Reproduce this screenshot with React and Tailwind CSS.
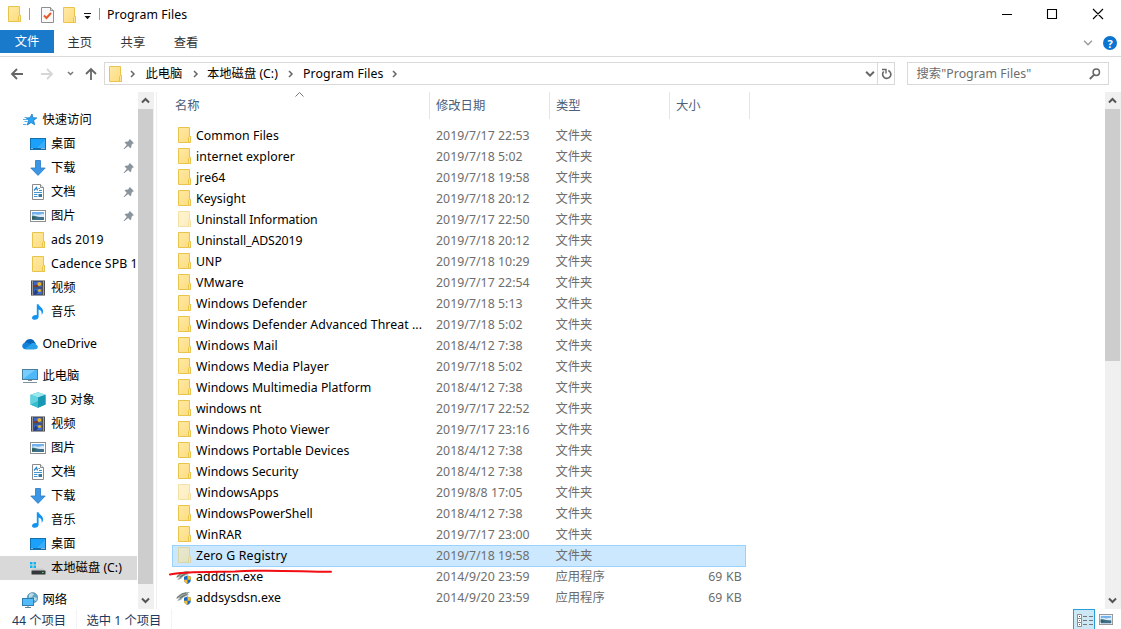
import React from 'react';

const FOLDER = '文件夹';
const APP = '应用程序';
const files = [
  ['Common Files', '2019/7/17 22:53'],
  ['internet explorer', '2019/7/18 5:02'],
  ['jre64', '2019/7/18 19:58'],
  ['Keysight', '2019/7/18 20:12'],
  ['Uninstall Information', '2019/7/17 22:50', 'hidden', 'tracking-[-0.1px]'],
  ['Uninstall_ADS2019', '2019/7/18 20:12', '', 'tracking-[-0.1px]'],
  ['UNP', '2019/7/18 10:29'],
  ['VMware', '2019/7/17 22:54', '', 'tracking-[0.15px]'],
  ['Windows Defender', '2019/7/18 5:13'],
  ['Windows Defender Advanced Threat ...', '2019/7/18 5:02'],
  ['Windows Mail', '2018/4/12 7:38', '', 'tracking-[0.15px]'],
  ['Windows Media Player', '2019/7/18 5:02', '', 'tracking-[0.13px]'],
  ['Windows Multimedia Platform', '2018/4/12 7:38', '', 'tracking-[0.02px]'],
  ['windows nt', '2019/7/17 22:52', '', 'tracking-[-0.07px]'],
  ['Windows Photo Viewer', '2019/7/17 23:16'],
  ['Windows Portable Devices', '2018/4/12 7:38'],
  ['Windows Security', '2018/4/12 7:38', '', 'tracking-[0.02px]'],
  ['WindowsApps', '2019/8/8 17:05', 'hidden', 'tracking-[0.13px]'],
  ['WindowsPowerShell', '2018/4/12 7:38', '', 'tracking-[0.02px]'],
  ['WinRAR', '2019/7/17 23:00'],
  ['Zero G Registry', '2019/7/18 19:58', 'selected', 'tracking-[0.17px]'],
  ['adddsn.exe', '2014/9/20 23:59', 'app', 'tracking-[0.1px]'],
  ['addsysdsn.exe', '2014/9/20 23:59', 'app', 'tracking-[0.05px]'],
];

function Folder({ faded = false, className = '' }) {
  return (
    <svg width="14" height="16" viewBox="0 0 14 16" className={`block shrink-0 ${faded ? 'opacity-50' : ''} ${className}`}>
      <defs>
        <linearGradient id="fold" x1="0" y1="0" x2="1" y2="1">
          <stop offset="0" stopColor="#ffe9a6" />
          <stop offset="1" stopColor="#fddc7c" />
        </linearGradient>
      </defs>
      <path d="M.5.5h11v9h1v6H.5z" fill="url(#fold)" stroke="#e9c44c" />
      <path d="M10.5 15v-4.5l1-1h1v6h-2z" fill="#ffe596" stroke="#e9c44c" />
    </svg>
  );
}

function NavFolder() {
  return <Folder className="ml-[2px]" />;
}

function Star() {
  return (
    <svg width="16" height="16" viewBox="0 0 16 16">
      <path d="M10 2l.8 3.700 4 .2-3.200 2.500 1 4.300-3.500-2.200L5.300 13l1.300-4.500L4.500 6l3.500-.2z" fill="#2ba4f4" stroke="#1278c4" strokeWidth=".8" />
      <path d="M2.500 5.500h3M1 7.500h4M2.500 9.500h3M1 12.500h3.500" stroke="#55aeea" strokeWidth="1" />
    </svg>
  );
}
function Desktop() {
  return (
    <svg width="16" height="16" viewBox="0 0 16 16">
      <rect x=".5" y="2.5" width="15" height="11" fill="#1ba1fa" stroke="#126fb0" />
      <path d="M7 12L15 4v8z" fill="#3aaefc" />
      <path d="M1 12.5h14" stroke="#126fb0" />
      <path d="M1.500 12.5h1M11.500 12.500h1M13.500 12.500h1" stroke="#fff" />
    </svg>
  );
}
function Download() {
  return (
    <svg width="16" height="16" viewBox="0 0 16 16">
      <path d="M5.5.5h5v7.500h4.700L8 15.400.8 8h4.700z" fill="#3b97e6" stroke="#2779c4" strokeWidth=".8" />
    </svg>
  );
}
function Doc() {
  return (
    <svg width="16" height="16" viewBox="0 0 16 16">
      <path d="M2.5.5h8l3 3v12h-11z" fill="#fff" stroke="#8a8a8a" />
      <path d="M10.5.5v3h3" fill="#eee" stroke="#8a8a8a" />
      <path d="M4 6.500l2.500-3 1 3" fill="none" stroke="#2386c8" strokeWidth="1.200" />
      <path d="M8.500 4.500H10M9 6.500h3M4 8.500h8M4 10.500h3.500M4 12.500h3.500" stroke="#4496d0" />
      <path d="M8.500 10h3.500v3H8.500z" fill="#39779b" />
    </svg>
  );
}
function Picture({ small = false }) {
  return (
    <svg width={small ? 14 : 16} height={small ? 11 : 16} viewBox={small ? '0 2 16 12' : '0 0 16 16'} preserveAspectRatio="none">
      <rect x=".5" y="2.500" width="15" height="11" fill="#fff" stroke="#8f8f8f" />
      <rect x="2" y="4" width="12" height="8" fill="#72b0ee" />
      <path d="M2 7c3-2 5 .2 7-.3 2-.5 3-1 5-.5V9H2z" fill="#d9ebf5" />
      <path d="M2 7.500c3 .3 6 1.500 12 1.700V12H2z" fill="#3f7188" />
      <path d="M2 8.500l5 1.500-5 1z" fill="#316152" />
    </svg>
  );
}
function Video() {
  return (
    <svg width="16" height="16" viewBox="0 0 16 16">
      <rect x="1" y=".5" width="14" height="15" fill="#3c3c40" />
      <path d="M2.500 1.500v14M13.500 1.500v14" stroke="#fff" strokeWidth="1.400" strokeDasharray="1 1" />
      <rect x="4" y="1.500" width="8" height="6" fill="#3a66c8" />
      <rect x="4" y="8.500" width="8" height="6" fill="#3a6fd6" />
      <circle cx="9.300" cy="4" r="2" fill="#e8b52c" />
      <path d="M4 5.500l3-1 2 2.500H4z" fill="#7c3b25" />
      <circle cx="9.500" cy="10.500" r="1.500" fill="#e8b52c" />
      <path d="M5 9l3 3-2 2.500H4z" fill="#263b7a" />
    </svg>
  );
}
function Music() {
  return (
    <svg width="16" height="16" viewBox="0 0 16 16">
      <path d="M6.800.3h1.800c.2 2.300 4.700 3.400 4.500 7.200-.1 1.500-.8 2.700-1.600 3.500.7-2.600-.2-4.600-2.900-5.500v7.300c0 1.700-1.700 3-3.800 3-1.700 0-2.800-.8-2.800-2.100 0-1.800 2.300-3.100 4.800-2.700z" fill="#1494ee" />
    </svg>
  );
}
function Cloud() {
  return (
    <svg width="16" height="16" viewBox="0 0 16 16">
      <path d="M2 10C1.500 5.500 7 .8 11.500 4.300L14 8l-4 3z" fill="#0864b8" />
      <path d="M3.700 13.200C-.8 13.200-.9 7 3.500 6.800c2-.6 3.500.3 5 1.500l4 4.900z" fill="#1280d8" />
      <path d="M2.500 13l6-4.600C10 6.500 13 6.600 13.700 8.400 16.600 9 16.500 13.200 13.400 13.200H3.700z" fill="#28a0ea" />
    </svg>
  );
}
function Computer() {
  return (
    <svg width="16" height="16" viewBox="0 0 16 16">
      <rect x=".5" y="1.500" width="15" height="10" fill="#4db9fb" stroke="#4b7f9e" />
      <path d="M1 11L13 2H1z" fill="#78cdff" />
      <path d="M6 12.500h4M1 14.500h14" stroke="#7f919d" />
    </svg>
  );
}
function Cube() {
  return (
    <svg width="16" height="16" viewBox="0 0 16 16">
      <path d="M8 .3l7.500 2.500v9.700L8 15.700.5 12.500V2.800z" fill="#28b2c9" />
      <path d="M8 .3l7.500 2.500L8 5.600.5 2.800z" fill="#9ce7ee" />
      <path d="M.5 2.800L8 5.600v10.100L.5 12.500z" fill="#62d2df" />
      <path d="M8 5.600l7.500-2.800v9.700L8 15.700z" fill="#1799b3" />
      <path d="M.5 12.500L8 9v6.700z" fill="#35bccd" />
    </svg>
  );
}
function Drive() {
  return (
    <svg width="16" height="16" viewBox="0 0 16 16">
      <path d="M0 2h2.500v2.500H0zM3.500 2H6v2.500H3.500zM0 5.500h2.500V8H0zM3.500 5.500H6V8H3.500z" fill="#12b2ef" />
      <path d="M3 8.500h10l2 2.500H1z" fill="#c5c9cc" />
      <rect x="1.500" y="10.500" width="14" height="4" rx=".6" fill="#34383b" />
      <path d="M12 12.500h1.500" stroke="#4be15a" strokeWidth="1.200" />
    </svg>
  );
}
function Network() {
  return (
    <svg width="16" height="16" viewBox="0 0 16 16">
      <circle cx="10.500" cy="5.800" r="5.300" fill="#5fa5c5" stroke="#557f98" strokeWidth=".6" />
      <path d="M7 3c2-3 4-1 5-1l-2 3-3 1zM12 5l3 1-1 3-2-1z" fill="#b9dbe5" />
      <rect x=".5" y="6.500" width="11" height="7" fill="#51bafa" stroke="#2e7fae" />
      <path d="M3 15.500h6M5 14h2" stroke="#61808f" />
    </svg>
  );
}
function Pin() {
  return (
    <svg width="12" height="12" viewBox="0 0 12 12" className="ml-auto mr-[2px] block">
      <path d="M6.700.8L11 5.200l-1.200.4-1.300 1.300-.3 2.500-.9.800-2.100-2.300L1.500 11l-1-.1 3.300-4.100L1.600 4.600l.9-.9 2.500-.2L6.300 2z" fill="#8a949c" />
    </svg>
  );
}
function AppIcon() {
  return (
    <svg width="16" height="16" viewBox="0 0 16 16" className="block">
      <path d="M.5 7.500C4 3.500 8 1.800 14 2L9.500 5l4.500-.5L7 7.500l-1.500 2L2 11l2.500-3.500L.5 9z" fill="#9eaaa5" />
      <path d="M1 7.700L6 4l4-1M2 10.500L6 6.500l6-2.700M4.500 7.500l3-1" fill="none" stroke="#59635f" strokeWidth=".8" />
      <path d="M11.500 6.500l3.300 1.300v3c0 2-1.300 3.500-3.300 4.200-2-.7-3.500-2.200-3.500-4.200v-3z" fill="#1668c8" />
      <path d="M11.500 6.500l3.300 1.300v2.900h-3.300zM8 10.700h3.500V15c-2-.7-3.500-2.300-3.500-4.300z" fill="#f6bd2c" />
    </svg>
  );
}

function Chevron({ dir = 'down', w = 9, color = '#555', sw = 1.5 }) {
  const d = { down: 'M1 2.500L4.500 6 8 2.500', up: 'M1 6.500L4.500 3 8 6.500', right: 'M3 1.500L6 4.500 3 7.500' }[dir];
  return (
    <svg width={w} height={w} viewBox="0 0 9 9" className="block shrink-0">
      <path d={d} fill="none" stroke={color} strokeWidth={sw} />
    </svg>
  );
}
function Crumb() {
  return (
    <svg width="10" height="10" viewBox="0 0 10 10" className="block shrink-0">
      <path d="M3 2l3 3-3 3" fill="none" stroke="#666" strokeWidth="1.500" />
    </svg>
  );
}

const nav = [
  [Star, '快速访问', 0],
  [Desktop, '桌面', 1, 'pin'],
  [Download, '下载', 1, 'pin'],
  [Doc, '文档', 1, 'pin'],
  [Picture, '图片', 1, 'pin'],
  [NavFolder, 'ads 2019', 1],
  [NavFolder, 'Cadence SPB 1', 1],
  [Video, '视频', 1],
  [Music, '音乐', 1],
  null,
  [Cloud, 'OneDrive', 0],
  null,
  [Computer, '此电脑', 0],
  [Cube, '3D 对象', 1],
  [Video, '视频', 1],
  [Picture, '图片', 1],
  [Doc, '文档', 1],
  [Download, '下载', 1],
  [Music, '音乐', 1],
  [Desktop, '桌面', 1],
  [Drive, '本地磁盘 (C:)', 1, 'selected'],
  null,
  [Network, '网络', 0],
];

function NavItem({ item }) {
  if (!item) return <div className="h-2 shrink-0" />;
  const [Icon, label, level, flag] = item;
  const latin = Icon === NavFolder;
  return (
    <div className={`flex h-6 w-[137px] shrink-0 items-center ${level ? 'pl-[30px]' : 'pl-[22px]'} ${flag === 'selected' ? 'bg-[#d9d9d9]' : ''}`}>
      <span className="flex w-4 shrink-0 justify-center"><Icon /></span>
      <span className={`whitespace-nowrap leading-6 ${level ? 'ml-[5px]' : 'ml-[4.500px]'} ${latin ? 'tracking-[0.12px]' : ''}`}>{label}</span>
      {flag === 'pin' && <Pin />}
    </div>
  );
}

function Scrollbar({ thumb, className }) {
  return (
    <div className={`flex shrink-0 flex-col bg-[#f0f0f0] ${className}`}>
      <div className="flex h-[17px] w-[15px] shrink-0 items-center justify-center"><Chevron dir="up" sw={2} /></div>
      <div className={`w-[15px] bg-[#cdcdcd] ${thumb}`} />
      <div className="mt-auto flex h-[17px] w-[15px] shrink-0 items-center justify-center"><Chevron sw={2} /></div>
    </div>
  );
}

function FileRow({ file }) {
  const [name, date, flag, tracking = 'tracking-[0.07px]'] = file;
  const app = flag === 'app';
  const selected = flag === 'selected';
  return (
    <div className={`flex w-[574px] shrink-0 items-start leading-[22px] ${selected ? 'h-[22px] -mb-px bg-[#cce8ff] outline outline-1 -outline-offset-1 outline-[#99d1ff]' : 'h-[21px]'}`}>
      <span className="flex w-6 shrink-0 pl-1 pt-[2px]">{app ? <span className="pt-px"><AppIcon /></span> : <span className="pl-[1.500px]"><Folder faded={flag === 'hidden' || selected} /></span>}</span>
      <span className={`w-[240px] whitespace-nowrap ${tracking}`}>{name}</span>
      <span className="w-[120px] whitespace-nowrap text-[#6d6d6d] tracking-[0.04px]">{date}</span>
      <span className="w-[120px] text-[#6d6d6d] -ml-[0.500px]">{app ? APP : FOLDER}</span>
      <span className="flex-1 pr-1 text-right text-[#6d6d6d] tracking-[0.2px]">{app ? '69 KB' : ''}</span>
    </div>
  );
}

export default function App() {
  return (
    <div className="flex h-[629px] w-[1121px] flex-col overflow-hidden bg-white font-['Noto_Sans','Noto_Sans_CJK_SC',sans-serif] text-[12.300px] text-black">
      <div className="flex h-[30px] shrink-0 items-center pl-2">
        <Folder className="-mt-[2px]" />
        <span className="ml-[7px] -mt-[2px] h-3 w-px bg-[#9b9b9b]" />
        <svg width="13" height="16" viewBox="0 0 13 16" className="ml-[11px]">
          <path d="M.5.500h9l3 3v12H.5z" fill="#f9f9f9" stroke="#8f8f8f" />
          <path d="M9.500.5v3h3" fill="#ddd" stroke="#8f8f8f" />
          <path d="M3 8.500l2.500 2.500L10 6" fill="none" stroke="#e7592a" strokeWidth="2" />
        </svg>
        <Folder className="ml-[9px]" />
        <svg width="8" height="7" viewBox="0 0 8 7" className="ml-[7px] mt-0.5"><path d="M0 .5h7" stroke="#111" /><path d="M.5 3h6l-3 3.300z" fill="#111" /></svg>
        <span className="ml-[7px] -mt-[2px] h-3 w-px bg-[#9b9b9b]" />
        <span className="ml-[7px] leading-[30px] tracking-[0.07px]">Program Files</span>
        <svg width="102" height="12" viewBox="0 0 102 12" className="ml-auto mr-[17px] -mt-[2px]">
          <path d="M0 6.500h10M45.500 1.500h9v9h-9zM91 1l10 10M101 1L91 11" fill="none" stroke="#000" strokeWidth="1.100" />
        </svg>
      </div>
      <div className="flex h-[27px] shrink-0 border-b border-[#dadbdc] text-[#333]">
        <div className="flex h-[23px] w-[54px] items-center justify-center bg-[#1979ca] pt-[2px] text-white">文件</div>
        <div className="ml-[13.500px] flex h-[24px] items-center gap-[28.500px] pt-[2px]"><span>主页</span><span>共享</span><span>查看</span></div>
        <div className="ml-auto mr-[4px] flex h-[26px] items-center gap-[10px]">
          <Chevron color="#999" w={10} sw={1.300} />
          <span className="flex h-[14px] w-[14px] items-center justify-center rounded-full bg-[#0b73d0] text-[11px] font-bold leading-none text-white">?</span>
        </div>
      </div>
      <div className="flex h-[35px] shrink-0 items-center">
        <svg width="104" height="16" viewBox="0 0 104 16" className="-mt-[2px] shrink-0">
          <path d="M23 8H12M17 3l-5 5 5 5" fill="none" stroke="#666" strokeWidth="1.800" />
          <path d="M41 8h11M47 3l5 5-5 5" fill="none" stroke="#d6d6d6" strokeWidth="1.800" />
          <path d="M68 6l2.500 2.500L73 6" fill="none" stroke="#777" strokeWidth="1.500" />
          <path d="M91 14V3M86 8l5-5 5 5" fill="none" stroke="#666" strokeWidth="1.800" />
        </svg>
        <div className="mt-[-2px] flex h-[23px] w-[791px] shrink-0 items-center border border-[#d9d9d9] pl-1">
          <Folder className="h-[16px]" />
          <span className="ml-[5px]"><Crumb /></span>
          <span className="ml-[7.500px] w-[45.500px] pt-px">此电脑</span>
          <Crumb />
          <span className="ml-[6px] w-[79px] whitespace-nowrap pt-px">本地磁盘 (C:)</span>
          <Crumb />
          <span className="ml-[7px] w-[87px] whitespace-nowrap pt-px tracking-[0.1px]">Program Files</span>
          <Crumb />
          <span className="ml-auto mr-[2px]"><Chevron w={10} sw={1.800} color="#666" /></span>
          <div className="flex h-full w-[17px] items-center justify-center border-l border-[#d9d9d9]">
            <svg width="11" height="12" viewBox="0 0 11 12"><path d="M7.300 2.500A4.100 4.100 0 1 1 2.700 3.500" fill="none" stroke="#666" strokeWidth="1.600" /><path d="M1 1.500h4v4" fill="none" stroke="#666" strokeWidth="1.400" /></svg>
          </div>
        </div>
        <div className="ml-3 mt-[-2px] flex h-[23px] w-[202px] shrink-0 items-center border border-[#d9d9d9] pl-[8.500px] pr-[7px] text-[#6d6d6d]">
          <span className="pt-px tracking-[0.05px]">搜索"Program Files"</span>
          <svg width="12" height="12" viewBox="0 0 12 12" className="ml-auto"><circle cx="7.300" cy="4.300" r="3.200" fill="none" stroke="#666" strokeWidth="1.500" /><path d="M5 6.800L.8 11" stroke="#666" strokeWidth="1.900" /></svg>
        </div>
      </div>

      <div className="flex h-[517px] shrink-0">
        <div className="flex w-[138px] shrink-0 flex-col overflow-hidden pt-4">
          {nav.map((item, i) => <NavItem key={i} item={item} />)}
        </div>
        <Scrollbar className="w-4" thumb="h-[475px]" />
        <div className="ml-[2px] w-px shrink-0 bg-[#f0f0f0]" />
        <div className="relative flex flex-1 flex-col pl-[15px]">
          <div className="flex h-[27px] shrink-0 text-[#4c607a]">
            <span className="w-[258px] border-r border-[#e5e5e5] pl-[3px] leading-[27px]">名称</span>
            <span className="w-[120px] border-r border-[#e5e5e5] pl-[6px] leading-[27px]">修改日期</span>
            <span className="w-[120px] border-r border-[#e5e5e5] pl-[6px] leading-[27px]">类型</span>
            <span className="w-[80px] border-r border-[#e5e5e5] pl-[6px] leading-[27px]">大小</span>
          </div>
          <div className="mt-[6px] flex flex-col">
            {files.map((f) => <FileRow key={f[0]} file={f} />)}
          </div>
          <svg width="9" height="5" viewBox="0 0 9 5" className="absolute left-[138px] top-0"><path d="M.5 4.500l4-4 4 4" fill="none" stroke="#777" /></svg>
          <svg width="165" height="8" viewBox="0 0 165 8" className="absolute left-[12px] top-[476px]">
            <path d="M1 6.500C12 3.500 42 4 66 3.500 92 1.500 118 3 162 3.800" fill="none" stroke="#f10d12" strokeWidth="2" strokeLinecap="round" />
          </svg>
        </div>
        <Scrollbar className="w-4" thumb="h-[252px]" />
      </div>

      <div className="flex h-5 shrink-0 items-start pl-3 text-[#1e395b]">
        <span className="w-[64px] whitespace-nowrap leading-[23px]">44 个项目</span>
        <span className="h-5 w-px bg-[#f3f3f3]" />
        <span className="ml-[9.500px] whitespace-nowrap leading-[23px]">选中 1 个项目</span>
        <span className="ml-[10px] h-5 w-px bg-[#f3f3f3]" />
        <div className="ml-auto h-[21px] w-[22px] border border-[#26a0da] bg-[#cce8f5]">
          <svg width="20" height="19" viewBox="0 0 20 19">
            <path d="M3.500 4.500h4v4h-4zM3.500 8.500h4v4h-4zM3.500 12.500h4v4h-4z" fill="#fff" stroke="#8f8f8f" />
            <path d="M5 6.500h1" stroke="#555" /><path d="M5 10.500h1" stroke="#2c86e0" /><path d="M5 14.500h1" stroke="#d33" />
            <path d="M9 6.500h4M15 6.500h4M9 10.500h4M15 10.500h4M9 14.500h4M15 14.500h4" stroke="#777" />
          </svg>
        </div>
        <span className="ml-1 mr-2 pt-[5px]"><Picture small /></span>
      </div>
    </div>
  );
}
